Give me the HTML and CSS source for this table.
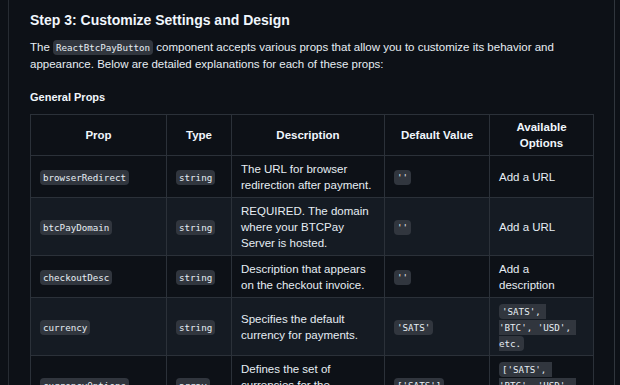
FILE: index.html
```html
<!DOCTYPE html>
<html lang="en">
<head>
<meta charset="utf-8">
<title>Step 3: Customize Settings and Design</title>
<link rel="stylesheet" href="styles.css">
</head>
<body>
<div class="page">
  <article class="markdown">
    <h3 class="step-title">Step 3: Customize Settings and Design</h3>
    <p class="intro">The <code>ReactBtcPayButton</code> component accepts various props that allow you to customize its behavior and appearance. Below are detailed explanations for each of these props:</p>
    <h4 class="section-title">General Props</h4>
    <table class="props">
      <colgroup>
        <col class="c-prop">
        <col class="c-type">
        <col class="c-desc">
        <col class="c-default">
        <col class="c-options">
      </colgroup>
      <thead>
        <tr>
          <th>Prop</th>
          <th>Type</th>
          <th>Description</th>
          <th>Default Value</th>
          <th>Available Options</th>
        </tr>
      </thead>
      <tbody>
        <tr>
          <td><code>browserRedirect</code></td>
          <td><code>string</code></td>
          <td>The URL for browser redirection after payment.</td>
          <td><code>''</code></td>
          <td>Add a URL</td>
        </tr>
        <tr>
          <td><code>btcPayDomain</code></td>
          <td><code>string</code></td>
          <td>REQUIRED. The domain where your BTCPay Server is hosted.</td>
          <td><code>''</code></td>
          <td>Add a URL</td>
        </tr>
        <tr>
          <td><code>checkoutDesc</code></td>
          <td><code>string</code></td>
          <td>Description that appears on the checkout invoice.</td>
          <td><code>''</code></td>
          <td>Add a description</td>
        </tr>
        <tr>
          <td><code>currency</code></td>
          <td><code>string</code></td>
          <td>Specifies the default currency for payments.</td>
          <td><code>'SATS'</code></td>
          <td><code>'SATS', 'BTC', 'USD', etc.</code></td>
        </tr>
        <tr>
          <td><code>currencyOptions</code></td>
          <td><code>array</code></td>
          <td>Defines the set of currencies for the selection dropdown.</td>
          <td><code>['SATS']</code></td>
          <td><code>['SATS', 'BTC', 'USD', 'EUR']</code></td>
        </tr>
      </tbody>
    </table>
  </article>
</div>
</body>
</html>
```
FILE: styles.css
```css
html, body {
  margin: 0;
  padding: 0;
  background: #0d1117;
}

body {
  height: 385px;
  overflow: hidden;
  font-family: "Liberation Sans", Arial, sans-serif;
  color: #e6edf3;
}

.page {
  margin-left: 8px;
  width: 605px;
  min-height: 385px;
  border-left: 1px solid #272c33;
  border-right: 1px solid #30363d;
}

.markdown {
  padding: 10px 21px 0 21px;
}

.step-title {
  margin: 0;
  font-size: 14px;
  line-height: 20px;
  font-weight: 700;
  color: #f0f6fc;
}

.intro {
  margin: 9px 0 0;
  font-size: 11.5px;
  line-height: 17px;
}

.section-title {
  margin: 16px 0 0;
  font-size: 11px;
  line-height: 16px;
  font-weight: 700;
  color: #f0f6fc;
}

code {
  font-family: "DejaVu Sans Mono", "Liberation Mono", monospace;
  font-size: 9.2px;
  line-height: 1;
  padding: 2px 3px;
  background: #31363e;
  border-radius: 4px;
  color: #e6edf3;
  white-space: break-spaces;
}

.props {
  margin-top: 9px;
  width: 563px;
  table-layout: fixed;
  border-collapse: collapse;
  font-size: 11.5px;
  line-height: 16px;
}

.c-prop { width: 136px; }
.c-type { width: 65px; }
.c-desc { width: 153px; }
.c-default { width: 105px; }
.c-options { width: 104px; }

.props th,
.props td {
  border: 1px solid #2b3139;
  padding: 4.5px 9px;
  vertical-align: middle;
}

.props th {
  padding: 4px 9px;
  font-weight: 700;
  text-align: center;
  color: #f0f6fc;
}

.props td {
  text-align: left;
}

.props tr {
  background: #0d1117;
}

.props tbody tr:nth-child(2n) {
  background: #151b23;
}
```
